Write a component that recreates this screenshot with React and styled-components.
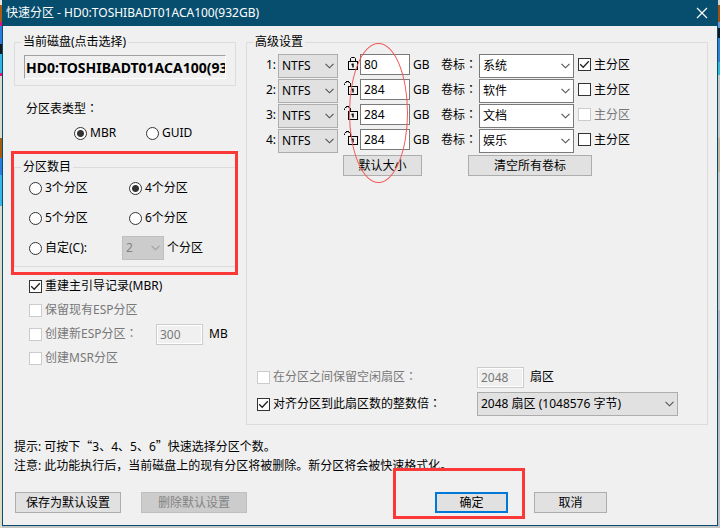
import React from 'react';
import styled, { createGlobalStyle, css } from 'styled-components';

const GlobalStyle = createGlobalStyle`
  * {
    box-sizing: border-box;
  }

  body {
    margin: 0;
    background: #c4c4c4;
  }

  body,
  button,
  input,
  select {
    font-family: 'Noto Sans', 'Noto Sans CJK SC', sans-serif;
    font-size: 12px;
    line-height: 16px;
    color: #000;
  }
`;

const leftEdge = css`
  linear-gradient(
    #e8e4dc 0 5px, #a85c10 5px 22px, #e0107c 22px 26px, #2c7ce0 26px 44px,
    #101820 44px 54px, #30b4e4 54px 73px, #e0107c 73px 76px, #dcdcd0 76px 138px,
    #a85c10 138px 158px, #2c7ce0 158px 175px, #38b8e8 175px 206px, #dcdcc8 206px
  )
`;

const rightEdge = css`
  linear-gradient(
    #d4d4d4 0 5px, #a05010 5px 22px, #6c94dc 22px 28px, #101820 28px 38px,
    #3080d8 38px 62px, #30bcd8 62px 75px, #c8c8c4 75px 138px,
    #c0b4a4 138px 172px, #c8c8c8 172px 310px, #b8b8c4 310px 380px, #c0c0c0 380px
  )
`;

const Desktop = styled.div`
  min-height: 100vh;
  padding: 0 2px 2px;
  display: flex;
  background: ${leftEdge} left / 2px 100% no-repeat, ${rightEdge} right / 2px 100% no-repeat;
`;

const Window = styled.main`
  flex: 1;
  display: flex;
  flex-direction: column;
  background: #f0f0f0;
  border: 1px solid #074e6e;
  border-top: 0;
`;

const TitleBar = styled.header`
  height: 26px;
  padding: 0 9px 0 3px;
  display: flex;
  align-items: center;
  justify-content: space-between;
  background: #074e6e;
`;

const Title = styled.h1`
  margin: 0;
  font-size: 12px;
  font-weight: 400;
  color: #fff;
`;

const CloseButton = styled.button`
  display: flex;
  padding: 0;
  border: 0;
  background: none;
`;

const Content = styled.div`
  flex: 1;
  padding: 8px 9px 0 11px;
  display: grid;
  grid-template-columns: 222px 1fr;
  column-gap: 10px;
`;

const Column = styled.div`
  display: flex;
  flex-direction: column;
`;

const Group = styled.fieldset`
  min-width: 0;
  margin: 0;
  padding: ${(props) => props.$padding || '5px 9px 6px'};
  border: 1px solid #dcdcdc;
`;

const AdvancedGroup = styled(Group)`
  display: flex;
  flex-direction: column;
  justify-content: space-between;
`;

const Legend = styled.legend`
  margin-left: ${(props) => props.$indent || '-3px'};
  padding: 0 2px;
  line-height: 16px;
`;

const DiskField = styled.input`
  display: block;
  width: 100%;
  height: 24px;
  padding: 0 0 0 1px;
  border: 1px solid;
  border-color: #a0a0a0 #fff #fff #a0a0a0;
  background: #f0f0f0;
  font-size: 14px;
  font-weight: 700;
`;

const TableType = styled.div`
  padding: 15px 0 18px 12px;
  display: flex;
  flex-direction: column;
  gap: 8px;
`;

const TypeOptions = styled.div`
  padding-left: 48px;
  display: grid;
  grid-template-columns: 72px auto;
`;

const CountGrid = styled.div`
  display: grid;
  grid-template-columns: 93px 1fr;
  grid-auto-rows: 24px;
  row-gap: 6px;
  align-items: center;
`;

const CountOption = styled.div`
  padding-left: 7px;
`;

const Marked = styled.div`
  position: relative;
`;

const RedBox = styled.span`
  position: absolute;
  inset: ${(props) => props.$inset};
  border: 3px solid #fb3838;
  pointer-events: none;
`;

const RedOval = styled.span`
  position: absolute;
  top: -11px;
  bottom: -7px;
  left: 93px;
  width: 59px;
  border: 1px solid #f05858;
  border-radius: 50%;
  pointer-events: none;
`;

const Inline = styled.div`
  display: flex;
  align-items: center;
  gap: ${(props) => props.$gap || '3px'};
`;

const ChoiceLabel = styled.label`
  display: flex;
  align-items: center;
  gap: 3px;
  white-space: nowrap;
  color: ${(props) => (props.$disabled ? '#787878' : '#000')};
`;

const RadioInput = styled.input`
  appearance: none;
  width: 13px;
  height: 13px;
  margin: 0;
  border: 1px solid #333;
  border-radius: 50%;
  background: #fff;

  &:checked {
    background: radial-gradient(circle, #333 0 3px, #fff 4px);
  }
`;

const Stack = styled.span`
  display: grid;
  align-items: center;

  > * {
    grid-area: 1 / 1;
  }

  > svg {
    pointer-events: none;
  }
`;

const CheckInput = styled.input`
  appearance: none;
  width: 13px;
  height: 13px;
  margin: 0;
  border: 1px solid #333;
  background: #fff;

  &:disabled {
    border-color: #ccc;
  }
`;

const SelectFrame = styled(Stack)`
  width: ${(props) => props.$width};

  > svg {
    justify-self: end;
    margin-right: 4px;
  }
`;

const SelectInput = styled.select`
  appearance: none;
  width: 100%;
  height: 24px;
  margin: 0;
  padding: 0 16px 0 3px;
  border: 1px solid ${(props) => (props.$editable ? '#7a7a7a' : '#adadad')};
  border-radius: 0;
  background: ${(props) => (props.$editable ? '#fff' : '#e1e1e1')};

  &:disabled {
    border-color: #bfbfbf;
    background: #ccc;
    color: #838383;
    opacity: 1;
  }
`;

const NumberInput = styled.input`
  width: ${(props) => props.$width};
  height: 21px;
  padding: 0 3px;
  border: 1px solid #7a7a7a;
  border-radius: 0;
  background: #fff;

  &:disabled {
    border-color: #ccc;
    background: #f0f0f0;
    box-shadow: inset 0 0 0 1px #fff;
    color: #787878;
  }
`;

const CheckList = styled.div`
  padding: 7px 0 0 15px;
  display: grid;
  grid-auto-rows: 24px;
  align-items: center;
`;

const EspRow = styled(Inline)`
  > label:first-child {
    width: 121px;
  }
`;

const PartitionRow = styled.div`
  height: 25px;
  line-height: 21px;
  display: grid;
  grid-template-columns: 22px 65px 17px 50px 28px 41px 95px auto;
  align-items: start;
  justify-content: start;
`;

const RowNumber = styled.span`
  padding-right: 2px;
  text-align: right;
`;

const UnitText = styled.span`
  padding-left: 3px;
  white-space: nowrap;
`;

const RowChoice = styled.div`
  padding-left: 4px;
`;

// full-width colon centred in its cell
const Centred = styled.span`
  font-family: 'Noto Sans CJK TC', sans-serif;
  line-height: 1;
`;

const Quote = styled.span`
  font-family: 'Noto Sans CJK SC', sans-serif;
  line-height: 1;
`;

const Button = styled.button`
  width: ${(props) => props.$width};
  height: 21px;
  padding: 0;
  border: ${(props) => (props.$primary ? '2px solid #0078d7' : '1px solid #adadad')};
  background: #e1e1e1;

  &:disabled {
    border-color: #bfbfbf;
    background: #ccc;
    color: #838383;
  }
`;

const GroupButtons = styled.div`
  padding: 1px 0 0 87px;
  display: flex;
  gap: 46px;
`;

const SectorGrid = styled.div`
  padding-left: 1px;
  display: grid;
  grid-template-columns: 220px 1fr;
  grid-auto-rows: 24px;
  row-gap: 3px;
  align-items: center;
`;

const Footer = styled.footer`
  padding: 12px 11px 12px;
`;

const Hint = styled.p`
  margin: 0;
  line-height: 19px;
`;

const Actions = styled.div`
  margin-top: 17px;
  padding: 0 99px 0 1px;
  display: flex;
  justify-content: space-between;
`;

function CloseIcon() {
  return (
    <svg width="12" height="12" viewBox="0 0 12 12" fill="none" stroke="#fff" strokeWidth="1.2">
      <path d="M1 1l10 10M11 1L1 11" />
    </svg>
  );
}

function Chevron({ color }) {
  return (
    <svg width="9" height="6" viewBox="0 0 9 6" fill="none" stroke={color} strokeWidth="1.1">
      <path d="M0.5 0.8l4 4 4-4" />
    </svg>
  );
}

function LockIcon({ open }) {
  return (
    <svg width="16" height="17" viewBox="0 0 16 17" fill="none" stroke="#000">
      <rect x="5.5" y="7.5" width="9" height="8" />
      {open ? (
        <path d="M1.5 6V4.5M2 3.5h1.5M3 2.5h3M5.5 3.5h1.5M7.5 4v3.5" />
      ) : (
        <path d="M7.5 7V4.5l1-1h3l1 1V7" />
      )}
      <path d="M8.5 10.5h2M10 9.5v4" strokeWidth="1.4" />
    </svg>
  );
}

function Radio({ name, label, checked }) {
  return (
    <ChoiceLabel>
      <RadioInput type="radio" name={name} defaultChecked={checked} />
      {label}
    </ChoiceLabel>
  );
}

function Checkbox({ label, checked, disabled }) {
  return (
    <ChoiceLabel $disabled={disabled}>
      <Stack>
        <CheckInput type="checkbox" defaultChecked={checked} disabled={disabled} />
        {checked && (
          <svg width="13" height="13" viewBox="0 0 13 13" fill="none" stroke="#222" strokeWidth="1.3">
            <path d="M2.2 6.3l3 3 5.6-6" />
          </svg>
        )}
      </Stack>
      <span>{label}</span>
    </ChoiceLabel>
  );
}

function Select({ label, value, width, editable, disabled }) {
  return (
    <SelectFrame $width={width}>
      <SelectInput aria-label={label} defaultValue={value} $editable={editable} disabled={disabled}>
        <option>{value}</option>
      </SelectInput>
      <Chevron color={disabled ? '#a0a0a0' : '#505050'} />
    </SelectFrame>
  );
}

const colon = <Centred>：</Centred>;

const partitions = [
  { size: '80', volume: '系统', locked: true, primary: true },
  { size: '284', volume: '软件' },
  { size: '284', volume: '文档', disabled: true },
  { size: '284', volume: '娱乐' },
];

export default function App() {
  return (
    <>
      <GlobalStyle />
      <Desktop>
        <Window>
          <TitleBar>
            <Title>快速分区 - HD0:TOSHIBADT01ACA100(932GB)</Title>
            <CloseButton type="button" aria-label="关闭">
              <CloseIcon />
            </CloseButton>
          </TitleBar>

          <Content>
            <Column>
              <Group>
                <Legend>当前磁盘(点击选择)</Legend>
                <DiskField
                  type="text"
                  aria-label="当前磁盘"
                  readOnly
                  value="HD0:TOSHIBADT01ACA100(932GB)"
                />
              </Group>

              <TableType>
                <span>分区表类型{colon}</span>
                <TypeOptions>
                  <Radio name="table" label="MBR" checked />
                  <Radio name="table" label="GUID" />
                </TypeOptions>
              </TableType>

              <Marked>
                <Group $padding="1px 7px 6px 14px">
                  <Legend $indent="-8px">分区数目</Legend>
                  <CountGrid>
                    <Radio name="count" label="3个分区" />
                    <CountOption>
                      <Radio name="count" label="4个分区" checked />
                    </CountOption>
                    <Radio name="count" label="5个分区" />
                    <CountOption>
                      <Radio name="count" label="6个分区" />
                    </CountOption>
                    <Radio name="count" label="自定(C):" />
                    <Inline>
                      <Select label="分区数目" value="2" width="42px" disabled />
                      <span>个分区</span>
                    </Inline>
                  </CountGrid>
                </Group>
                <RedBox $inset="-8px -2px -8px -3px" />
              </Marked>

              <CheckList>
                <Checkbox label="重建主引导记录(MBR)" checked />
                <Checkbox label="保留现有ESP分区" disabled />
                <EspRow $gap="6px">
                  <Checkbox label={<>创建新ESP分区{colon}</>} disabled />
                  <NumberInput type="text" aria-label="ESP分区大小" $width="47px" defaultValue="300" disabled />
                  <span>MB</span>
                </EspRow>
                <Checkbox label="创建MSR分区" disabled />
              </CheckList>
            </Column>

            <AdvancedGroup $padding="4px 9px 8px">
              <Legend>高级设置</Legend>
              <Marked>
                {partitions.map((item, index) => (
                  <PartitionRow key={item.volume}>
                    <RowNumber>{index + 1}:</RowNumber>
                    <Select label="文件系统" value="NTFS" width="60px" />
                    <LockIcon open={!item.locked} />
                    <NumberInput type="text" aria-label="大小" $width="50px" defaultValue={item.size} />
                    <UnitText>GB</UnitText>
                    <UnitText>卷标{colon}</UnitText>
                    <Select label="卷标" value={item.volume} width="95px" editable />
                    <RowChoice>
                      <Checkbox label="主分区" checked={item.primary} disabled={item.disabled} />
                    </RowChoice>
                  </PartitionRow>
                ))}
                <GroupButtons>
                  <Button type="button" $width="79px">默认大小</Button>
                  <Button type="button" $width="124px">清空所有卷标</Button>
                </GroupButtons>
                <RedOval />
              </Marked>

              <SectorGrid>
                <Checkbox label={<>在分区之间保留空闲扇区{colon}</>} disabled />
                <Inline $gap="6px">
                  <NumberInput type="text" aria-label="空闲扇区" $width="47px" defaultValue="2048" disabled />
                  <span>扇区</span>
                </Inline>
                <Checkbox label={<>对齐分区到此扇区数的整数倍{colon}</>} checked />
                <Select label="对齐扇区数" value="2048 扇区 (1048576 字节)" width="201px" />
              </SectorGrid>
            </AdvancedGroup>
          </Content>

          <Footer>
            <Hint>
              提示: 可按下<Quote>“</Quote>3、4、5、6<Quote>”</Quote>快速选择分区个数。
            </Hint>
            <Hint>注意: 此功能执行后，当前磁盘上的现有分区将被删除。新分区将会被快速格式化。</Hint>
            <Actions>
              <Inline $gap="20px">
                <Button type="button" $width="106px">保存为默认设置</Button>
                <Button type="button" $width="106px" disabled>删除默认设置</Button>
              </Inline>
              <Inline $gap="26px">
                <Marked>
                  <Button type="submit" $width="73px" $primary>确定</Button>
                  <RedBox $inset="-24px -17px -6px -42px" />
                </Marked>
                <Button type="button" $width="73px">取消</Button>
              </Inline>
            </Actions>
          </Footer>
        </Window>
      </Desktop>
    </>
  );
}
